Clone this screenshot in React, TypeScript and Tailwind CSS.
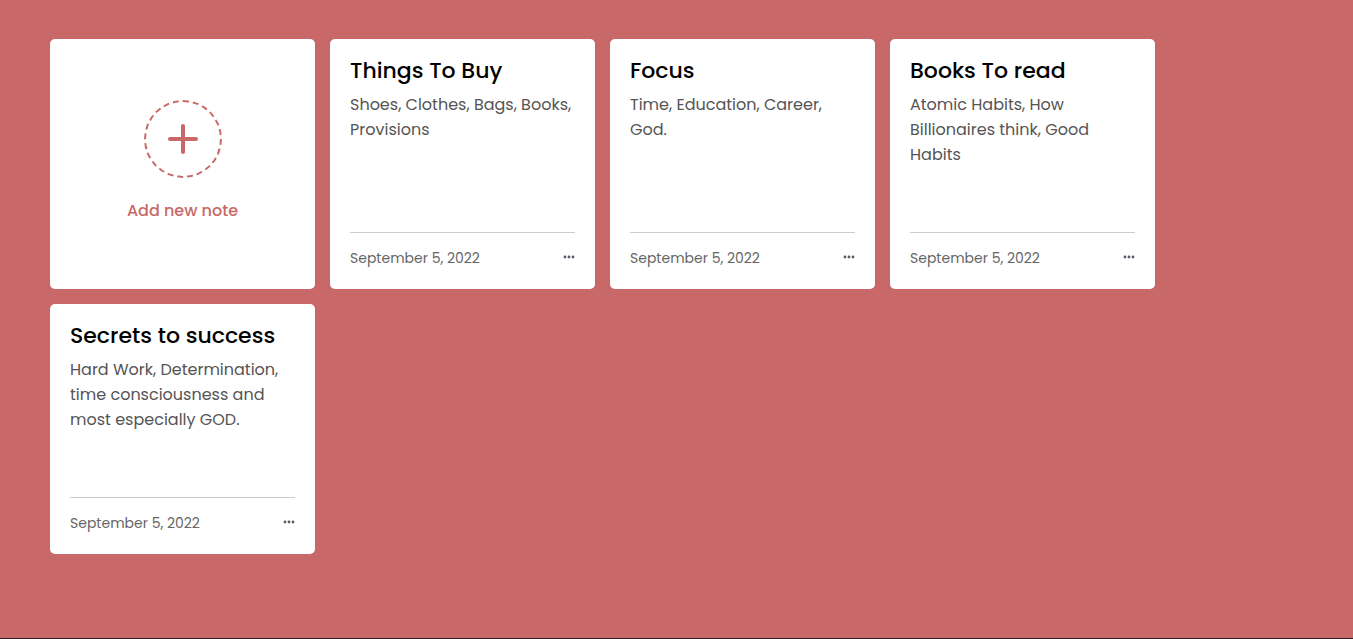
const notes = [
  { title: "Things To Buy", body: "Shoes, Clothes, Bags, Books, Provisions", date: "September 5, 2022" },
  { title: "Focus", body: "Time, Education, Career, God.", date: "September 5, 2022" },
  { title: "Books To read", body: "Atomic Habits, How Billionaires think, Good Habits", date: "September 5, 2022" },
  { title: "Secrets to success", body: "Hard Work, Determination, time consciousness and most especially GOD.", date: "September 5, 2022" },
];

function Dots() {
  return (
    <svg width="12" height="4" viewBox="0 0 12 4" className="text-[#555b66]">
      <circle cx="2" cy="2" r="1.4" fill="currentColor" />
      <circle cx="6" cy="2" r="1.4" fill="currentColor" />
      <circle cx="10" cy="2" r="1.4" fill="currentColor" />
    </svg>
  );
}

function AddCard() {
  return (
    <div className="w-[265px] h-[250px] bg-white rounded-[5px] flex flex-col items-center pt-[61px]">
      <div className="w-[78px] h-[78px] rounded-full border-2 border-dashed border-[#c86868] flex items-center justify-center">
        <svg width="30" height="30" viewBox="0 0 30 30">
          <path d="M15 2 V28 M2 15 H28" stroke="#c86868" strokeWidth="4" strokeLinecap="round" />
        </svg>
      </div>
      <div className="mt-[21px] text-[16px] leading-[24px] font-medium text-[#c86868]">Add new note</div>
    </div>
  );
}

function NoteCard({ title, body, date }: { title: string; body: string; date: string }) {
  return (
    <div className="w-[265px] h-[250px] bg-white rounded-[5px] flex flex-col px-5 pt-[19px]">
      <h2 className="text-[22px] leading-[26px] font-medium text-black">{title}</h2>
      <p className="mt-2 text-[16px] leading-[25px] text-[#555]">{body}</p>
      <div className="mt-auto border-t border-[#ccc] pt-[15px] pb-[21px] flex items-center justify-between h-[57px]">
        <span className="text-[14px] leading-[20px] text-[#666]">{date}</span>
        <span className="mb-[3px]"><Dots /></span>
      </div>
    </div>
  );
}

export default function App() {
  return (
    <div className="h-[639px] bg-[#2a1c22] overflow-hidden" style={{ fontFamily: "Poppins, 'Open Sans', sans-serif" }}>
      <div className="h-[638px] bg-[#c86868] pl-[50px] pt-[39px]">
        <div className="flex flex-wrap gap-[15px] w-[1120px]">
          <AddCard />
          {notes.map((n) => (
            <NoteCard key={n.title} {...n} />
          ))}
        </div>
      </div>
    </div>
  );
}
